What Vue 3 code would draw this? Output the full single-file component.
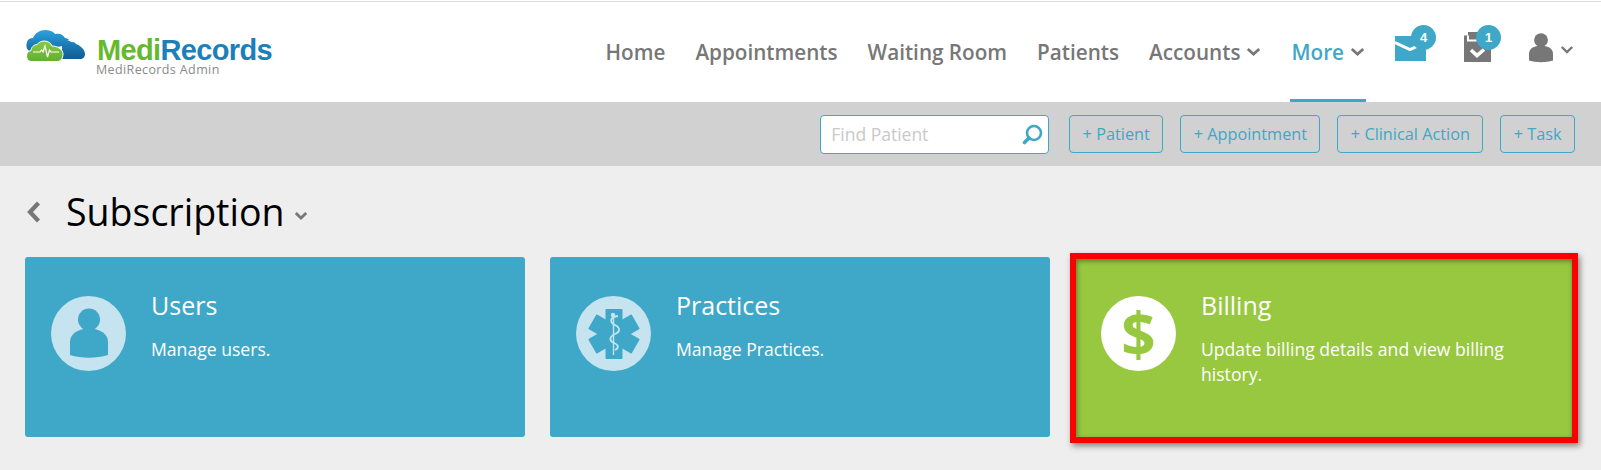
<script setup>
const navItems = [
  { label: 'Home' },
  { label: 'Appointments' },
  { label: 'Waiting Room' },
  { label: 'Patients' },
  { label: 'Accounts', caret: true },
  { label: 'More', caret: true, active: true },
]
const actions = ['+ Patient', '+ Appointment', '+ Clinical Action', '+ Task']
</script>

<template>
  <div class="page">
    <div class="top-rule"></div>
    <header class="header">
      <div class="brand">
        <svg class="cloud" width="59" height="32" viewBox="0 0 59 32">
          <defs>
            <linearGradient id="blueCloud" x1="0" y1="0" x2="0" y2="1">
              <stop offset="0" stop-color="#2ba3dc" />
              <stop offset="1" stop-color="#176ba8" />
            </linearGradient>
            <linearGradient id="darkCloud" x1="0" y1="0" x2="0" y2="1">
              <stop offset="0" stop-color="#1f86c4" />
              <stop offset="1" stop-color="#125a90" />
            </linearGradient>
            <linearGradient id="greenCloud" x1="0" y1="0" x2="0" y2="1">
              <stop offset="0" stop-color="#8ccb3e" />
              <stop offset="1" stop-color="#62ad34" />
            </linearGradient>
          </defs>
          <path d="M36 12c3-2 7-2 9 0 1 0 4 0 5 2 5 2 9 6 9 10 0 3-2 5-5 5H36z" fill="url(#darkCloud)" />
          <path d="M4 21C0 20 0 15 1 12c1-3 3-4 6-4 2-5 7-8 12-8 4 0 8 1 10 4 4-1 8 0 10 4 2 0 3 1 4 2-3 1-5 3-6 6z" fill="url(#blueCloud)" />
          <path d="M5 31.500c-3 0-4.500-3-4.500-5.500 0-3 1.500-5 4.500-5.500 0-3 3-6 6-6 2-2.500 5-3.500 7-3.500 4 0 7 2 8 5 5 0 11 3 11 8 0 4-2 7.500-6 7.500z" fill="url(#greenCloud)" stroke="#fff" stroke-width="1" />
          <path d="M7 22h7l1.500-2 1.500 2 2-6 2.500 11 2-7 1.500 2h8" fill="none" stroke="#fff" stroke-width="1.200" />
        </svg>
        <div class="brand-text">
          <div class="wordmark"><span class="medi">Medi</span><span class="records">Records</span></div>
          <div class="tenant">MediRecords Admin</div>
        </div>
      </div>

      <nav class="nav">
        <a v-for="item in navItems" :key="item.label" class="nav-item" :class="{ active: item.active }">
          {{ item.label }}
          <svg v-if="item.caret" class="caret" width="15" height="10" viewBox="0 0 15 10">
            <path d="M1.800 2 7.500 7.200 13.200 2" fill="none" stroke="#777" stroke-width="2.800" />
          </svg>
        </a>
        <div class="icon-item mail">
          <svg width="31" height="25" viewBox="0 0 31 25">
            <rect width="31" height="25" fill="#3fa7c7" />
            <path d="M0 6.500 15 13.500 24 9.500" fill="none" stroke="#fff" stroke-width="3" />
          </svg>
          <span class="badge">4</span>
        </div>
        <div class="icon-item tasks">
          <svg width="27" height="30" viewBox="0 0 27 30">
            <path d="M0 3.500h4V0h10v3.500h13V30H0z" fill="#777" />
            <path d="M4 3.500v5h12" fill="none" stroke="#fff" stroke-width="2" />
            <path d="M7 18l6 5.500 7-6" fill="none" stroke="#fff" stroke-width="3.600" />
          </svg>
          <span class="badge">1</span>
        </div>
        <div class="icon-item user">
          <svg width="24" height="31" viewBox="0 0 26 32">
            <circle cx="13" cy="8" r="7.500" fill="#777" />
            <path d="M0 30V23c0-6 5-9 13-9s13 3 13 9v7c-8 2.500-18 2.500-26 0z" fill="#777" />
          </svg>
          <svg class="caret" width="14" height="10" viewBox="0 0 14 10">
            <path d="M1.800 2 7 7l5.200-5" fill="none" stroke="#777" stroke-width="2.400" />
          </svg>
        </div>
      </nav>
    </header>

    <div class="toolbar">
      <label class="search">
        <span class="placeholder">Find Patient</span>
        <svg width="21" height="21" viewBox="0 0 21 21">
          <circle cx="12" cy="9" r="7" fill="none" stroke="#3fa7c7" stroke-width="2.600" />
          <path d="M7 14l-4.500 4.500" stroke="#3fa7c7" stroke-width="3.600" stroke-linecap="round" />
        </svg>
      </label>
      <button v-for="a in actions" :key="a" class="action">{{ a }}</button>
    </div>

    <main class="content">
      <div class="title-row">
        <svg class="back" width="16" height="22" viewBox="0 0 16 22">
          <path d="M12.500 2 4 11l8.500 9" fill="none" stroke="#777" stroke-width="4.200" />
        </svg>
        <h1>Subscription</h1>
        <svg class="title-caret" width="14" height="10" viewBox="0 0 14 10">
          <path d="M1.800 2 7 7l5.200-5" fill="none" stroke="#777" stroke-width="2.800" />
        </svg>
      </div>

      <div class="cards">
        <section class="card">
          <div class="disc pale">
            <svg width="40" height="52" viewBox="0 0 40 52">
              <circle cx="20" cy="11.500" r="11" fill="#3fa7c7" />
              <path d="M1 47V34C1 26 9 20.500 20 20.500S39 26 39 34V47c-12 3.500-26 3.500-38 0z" fill="#3fa7c7" />
            </svg>
          </div>
          <div class="card-body">
            <h2>Users</h2>
            <p>Manage users.</p>
          </div>
        </section>

        <section class="card">
          <div class="disc pale">
            <svg width="52" height="52" viewBox="0 0 52 52">
              <g fill="#3fa7c7">
                <rect x="17.500" y="1" width="17" height="50" rx="1" />
                <rect x="17.500" y="1" width="17" height="50" rx="1" transform="rotate(60 26 26)" />
                <rect x="17.500" y="1" width="17" height="50" rx="1" transform="rotate(-60 26 26)" />
              </g>
              <path d="M25.500 7v40" stroke="#c6e4ef" stroke-width="1.400" />
              <circle cx="25" cy="7" r="2.200" fill="#c6e4ef" />
              <path d="M30 8c-8 1-9 6-3 9 6 3 5 7 0 9-6 3-6 7-1 9 5 2 5 5 1 7" fill="none" stroke="#c6e4ef" stroke-width="1.800" />
            </svg>
          </div>
          <div class="card-body">
            <h2>Practices</h2>
            <p>Manage Practices.</p>
          </div>
        </section>

        <section class="card billing">
          <div class="disc white">
            <span class="dollar">$</span>
          </div>
          <div class="card-body">
            <h2>Billing</h2>
            <p>Update billing details and view billing history.</p>
          </div>
          <div class="highlight"></div>
        </section>
      </div>
    </main>
  </div>
</template>

<style>
html, body { margin: 0; background: #eee; }
</style>

<style scoped>
.page {
  width: 1601px;
  height: 470px;
  overflow: hidden;
  background: #eee;
  font-family: "Open Sans", sans-serif;
}
.top-rule {
  height: 1px;
  border-top: 1px solid #fff;
  background: #ddd;
}
.header {
  box-sizing: border-box;
  height: 100px;
  background: #fff;
  display: flex;
  justify-content: space-between;
  align-items: stretch;
  padding: 0 27px 0 26px;
}
.brand { display: flex; align-items: flex-start; padding-top: 28px; }
.cloud { display: block; }
.brand-text { margin-left: 12px; padding-top: 8px; }
.wordmark {
  font: bold 29px/24px "Liberation Sans", Arial, sans-serif;
  letter-spacing: -0.650px;
}
.medi { color: #66b82f; }
.records { color: #1d7fba; }
.tenant {
  font-size: 12.500px;
  line-height: 12px;
  margin: 2px 0 0 -1px;
  color: #8a8a8a;
  letter-spacing: 0.380px;
}
.nav { display: flex; align-items: stretch; }
.nav-item {
  display: flex;
  align-items: center;
  gap: 6px;
  padding: 2px 1px 0;
  margin-right: 28px;
  font-size: 20.700px;
  font-weight: 600;
  color: #777;
  border-bottom: 3px solid transparent;
  box-sizing: border-box;
  height: 100px;
}
.nav-item.active { color: #3fa7c7; border-bottom-color: #3fa7c7; margin-right: 29px; }
.icon-item { position: relative; display: flex; align-items: flex-start; gap: 7px; height: 96px; }
.mail { margin-right: 38px; padding-top: 34px; }
.tasks { margin-right: 38px; padding-top: 30px; }
.user { padding-top: 30px; }
.user .caret { margin-top: 13px; }
.badge {
  position: absolute;
  top: 23px;
  width: 25px;
  height: 25px;
  border-radius: 50%;
  background: #3fa7c7;
  color: #fff;
  font: bold 13px/25px "Liberation Sans", sans-serif;
  text-align: center;
}
.mail .badge { right: -10px; }
.tasks .badge { right: -10px; }
.toolbar {
  box-sizing: border-box;
  height: 64px;
  background: #d1d1d1;
  display: flex;
  justify-content: flex-end;
  align-items: center;
  gap: 17px;
  padding: 0 26px 0 0;
}
.search {
  box-sizing: border-box;
  width: 229px;
  height: 39px;
  margin-right: 3px;
  background: #fff;
  border: 1px solid #3fa7c7;
  border-radius: 4px;
  display: flex;
  align-items: center;
  justify-content: space-between;
  padding: 0 5px 0 10px;
}
.placeholder { font-size: 17.500px; color: #c9c9c9; }
.action {
  box-sizing: border-box;
  height: 38px;
  padding: 0 12.400px;
  background: transparent;
  border: 1px solid #3fa7c7;
  border-radius: 4px;
  color: #3fa7c7;
  font-family: "Open Sans", sans-serif;
  font-size: 16.300px;
}
.content { padding: 0 26px 0 25px; }
.title-row { display: flex; align-items: center; height: 91px; }
.back { margin-left: 1px; }
h1 {
  margin: 0 0 0 24px;
  font-size: 37.500px;
  font-weight: 400;
  color: #000;
  line-height: 91px;
}
.title-caret { margin: 8px 0 0 10px; }
.cards { display: grid; grid-template-columns: repeat(3, 500px); column-gap: 25px; }
.card {
  position: relative;
  box-sizing: border-box;
  height: 180px;
  background: #3fa7c7;
  border-radius: 3px;
  display: flex;
  padding: 39px 30px 0 26px;
  color: #fff;
}
.card.billing { background: #98c840; }
.disc {
  flex: none;
  width: 75px;
  height: 75px;
  border-radius: 50%;
  display: flex;
  align-items: center;
  justify-content: center;
}
.disc.pale { background: #c6e4ef; }
.disc.white { background: #fff; }
.dollar {
  font: bold 60px/75px "Open Sans", sans-serif;
  color: #98c840;
}
.card-body { margin-left: 25px; margin-top: -8px; }
h2 { margin: 0; font-size: 25px; font-weight: 400; line-height: 34px; }
p { margin: 15px 0 0; font-size: 17.600px; line-height: 25px; }
.highlight {
  position: absolute;
  left: -5px;
  right: -3px;
  top: -4px;
  bottom: -6px;
  border: 6px solid #fa0000;
  box-shadow: 2px 3px 6px rgba(0, 0, 0, 0.45), inset 1px 2px 5px rgba(0, 0, 0, 0.4);
}
</style>
